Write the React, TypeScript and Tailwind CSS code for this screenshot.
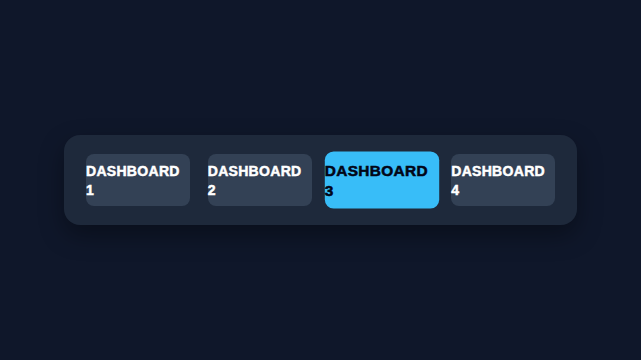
import React, { useState } from "react";

export default function App() {
  const [active, setActive] = useState(3);
  const items = [1, 2, 3, 4];
  return (
    <div className="w-[641px] h-[360px] bg-[#0f172a] flex items-center justify-center" style={{ fontFamily: '"Liberation Sans", Arial, sans-serif' }}>
      <div className="w-[513px] h-[90px] rounded-2xl bg-[#1e293b] px-[22px] flex items-center gap-[18px] shadow-[0_10px_25px_rgba(0,0,0,0.35)]">
        {items.map((n) => {
          const isActive = n === active;
          return (
            <button
              key={n}
              onClick={() => setActive(n)}
              className={
                isActive
                  ? "flex-1 h-[52px] pt-[2px] rounded-lg bg-[#38bdf8] text-[#020617] text-left text-[14px] leading-[19px] font-bold tracking-[0.3px] [-webkit-text-stroke:0.5px_#020617] scale-110 flex items-center"
                  : "flex-1 h-[52px] pt-[2px] rounded-lg bg-[#334155] text-white text-left text-[14px] leading-[19px] font-bold tracking-[0.3px] [-webkit-text-stroke:0.5px_#ffffff] flex items-center"
              }
            >
              <span>DASHBOARD {n}</span>
            </button>
          );
        })}
      </div>
    </div>
  );
}
